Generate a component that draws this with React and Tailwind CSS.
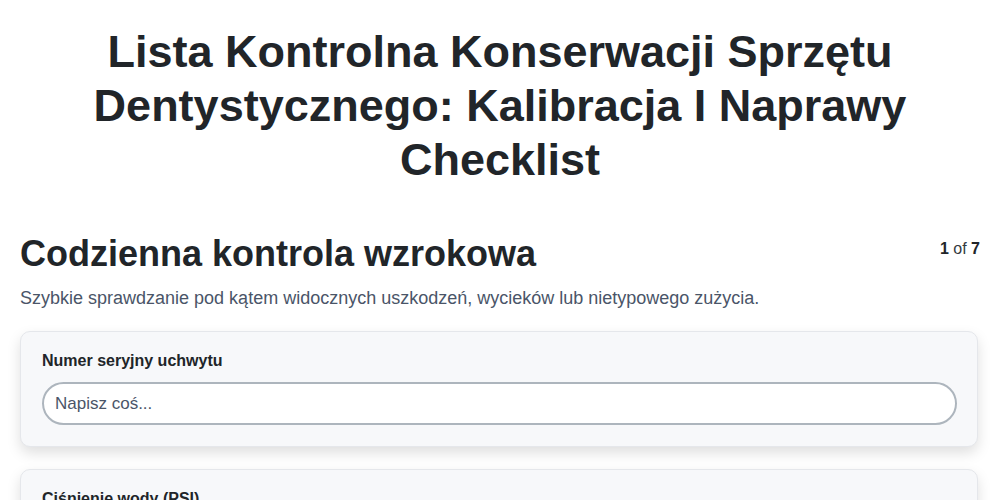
import React from "react";

const fields = [
  { id: "serial", label: "Numer seryjny uchwytu" },
  { id: "pressure", label: "Ciśnienie wody (PSI)" },
];

export default function App() {
  return (
    <div
      className="min-h-screen bg-white px-5 text-[#212529]"
      style={{ fontFamily: '"Liberation Sans", Arial, sans-serif' }}
    >
      <h1 className="mx-auto max-w-[860px] pt-[25px] text-center text-[45px] font-bold leading-[54px]">
        Lista Kontrolna Konserwacji Sprzętu Dentystycznego: Kalibracja I Naprawy Checklist
      </h1>

      <div className="mt-[47px] flex items-start justify-between">
        <h2 className="text-[36px] font-bold leading-[40px]">Codzienna kontrola wzrokowa</h2>
        <div className="mt-[3px] text-[16px]">
          <span className="font-bold">1</span> <span className="text-[#343a40]">of</span>{" "}
          <span className="font-bold">7</span>
        </div>
      </div>
      <p className="mt-[12px] text-[18px] leading-[24px] text-[#4a5568]">
        Szybkie sprawdzanie pod kątem widocznych uszkodzeń, wycieków lub nietypowego zużycia.
      </p>

      <div className="mt-[21px] flex flex-col gap-[22px] pr-[2px]">
        {fields.map((f) => (
          <div
            key={f.id}
            className="rounded-[10px] border border-[#e5e7eb] bg-[#f7f8fa] pl-[21px] pr-[20px] pb-[21px] pt-[19px] shadow-[0_6px_14px_rgba(0,0,0,0.13)]"
          >
            <label className="block text-[16px] font-bold leading-[20px] text-[#212529]">
              {f.label}
            </label>
            <input
              type="text"
              placeholder="Napisz coś..."
              className="mt-[11px] block h-[43px] w-full rounded-full border-2 border-[#adb5bd] bg-white px-[11px] text-[17px] text-[#212529] outline-none placeholder:text-[#4a5568]"
            />
          </div>
        ))}
      </div>
    </div>
  );
}
